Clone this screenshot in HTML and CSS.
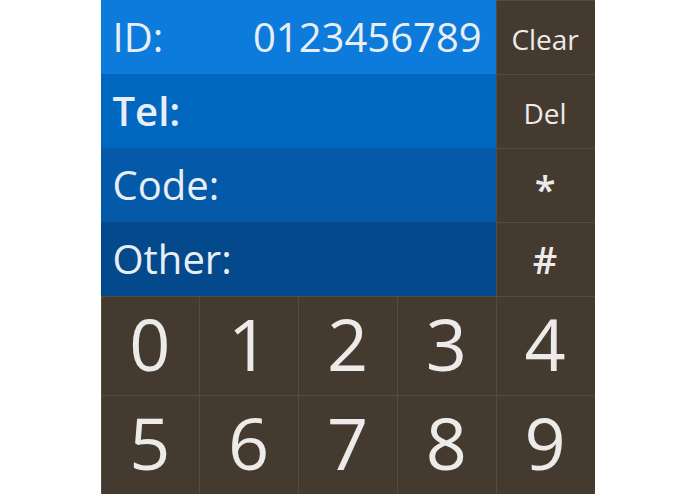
FILE: index.html
```html
<!DOCTYPE html>
<html lang="en">
<head>
    <meta charset="UTF-8">
    <meta name="viewport" content="width=device-width, initial-scale=1.0">
    <title>Keypad</title>
    <link rel="stylesheet" href="styles.css">
</head>
<body>
    <div class="pad">
        <div class="field field-id"><span>ID:</span><span class="value">0123456789</span></div>
        <div class="key side">Clear</div>
        <div class="field field-tel active"><span>Tel:</span></div>
        <div class="key side">Del</div>
        <div class="field field-code"><span>Code:</span></div>
        <div class="key sym star">*</div>
        <div class="field field-other"><span>Other:</span></div>
        <div class="key sym">#</div>

        <div class="key num">0</div>
        <div class="key num">1</div>
        <div class="key num">2</div>
        <div class="key num">3</div>
        <div class="key num">4</div>
        <div class="key num">5</div>
        <div class="key num">6</div>
        <div class="key num">7</div>
        <div class="key num">8</div>
        <div class="key num">9</div>
    </div>
</body>
</html>
```

FILE: styles.css
```css
body {
    margin: 0;
    background-color: #ffffff;
    font-family: "Open Sans", "Noto Sans", sans-serif;
}
.pad {
    width: 494px;
    height: 494px;
    margin: 0 auto;
    display: grid;
    grid-template-columns: repeat(5, minmax(0, 1fr));
    grid-template-rows: repeat(4, 74px) repeat(2, minmax(0, 1fr));
    background-color: #453a30;
}
.field {
    grid-column: 1 / 5;
    display: flex;
    align-items: center;
    justify-content: space-between;
    padding: 0 14px 2px 12px;
    color: #e9eef4;
    font-size: 40px;
}
.field-id {
    background-color: #0d7bdb;
}
.field-tel {
    background-color: #0067c1;
}
.field-code {
    background-color: #0459a9;
}
.field-other {
    background-color: #03498b;
}
.active {
    font-weight: 600;
}
.key {
    display: flex;
    align-items: center;
    justify-content: center;
    color: #ecebe9;
    box-shadow: inset 1px 1px 0 #564b41;
}
.side {
    font-size: 28px;
    padding-top: 4px;
}
.sym {
    font-size: 38px;
    font-weight: 600;
}
.star {
    padding-top: 8px;
}
.num {
    font-size: 72px;
    line-height: 1;
    padding-bottom: 6px;
}
```
